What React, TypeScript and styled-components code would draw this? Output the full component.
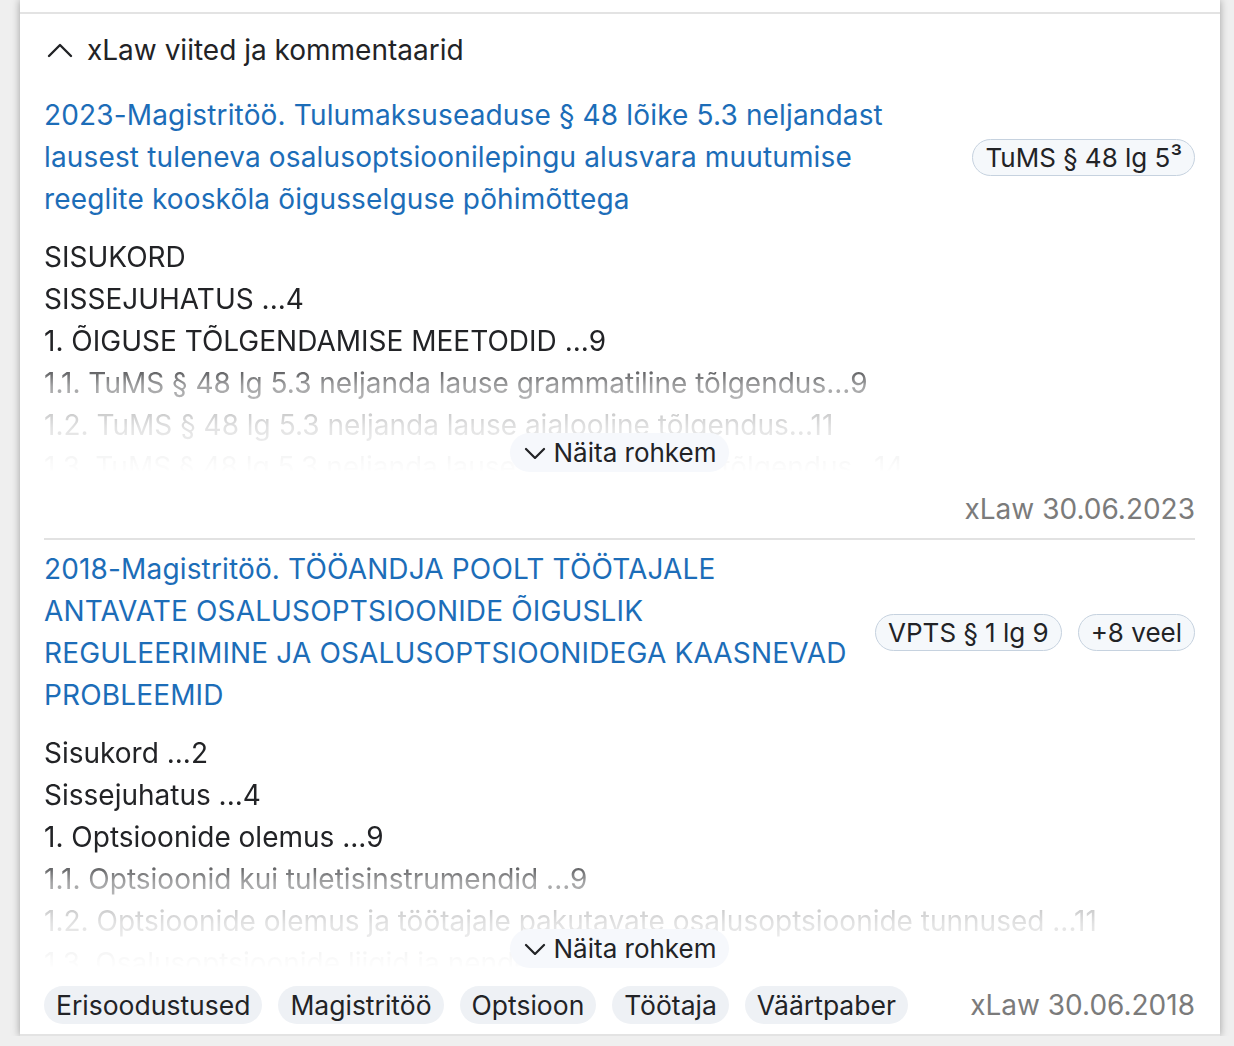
import React from 'react';
import styled, { createGlobalStyle } from 'styled-components';

const GlobalStyle = createGlobalStyle`
  html, body {
    margin: 0;
    padding: 0;
    background: #efefef;
    font-family: Inter, "Noto Sans", "Liberation Sans", sans-serif;
    color: #222326;
  }
`;

const Panel = styled.div`
  width: 1200px;
  margin-left: 20px;
  background: #ffffff;
  box-shadow: 0 0 8px rgba(0, 0, 0, 0.35);
`;

const TopRule = styled.div`
  height: 12px;
  border-bottom: 2px solid #e3e3e3;
`;

const Section = styled.section`
  padding: 0 25px 0 24px;
  border-bottom: 2px solid #e3e3e3;
`;

const SectionHeader = styled.button`
  display: flex;
  align-items: center;
  gap: 14px;
  height: 72px;
  padding: 0 0 0 3px;
  border: none;
  background: none;
  font: inherit;
  font-size: 28px;
  color: #222326;
  cursor: pointer;
`;

const Item = styled.article<{ $last?: boolean }>`
  padding: 8px 0 8px;
  border-bottom: ${(p) => (p.$last ? 'none' : '2px solid #e2e2e2')};
`;

const TitleRow = styled.div`
  display: flex;
  align-items: center;
  justify-content: space-between;
  gap: 24px;
`;

const Title = styled.a`
  flex: 1;
  font-size: 28px;
  line-height: 42px;
  letter-spacing: 0.15px;
  color: #1c6db8;
  text-decoration: none;
`;

const Pills = styled.div`
  display: flex;
  gap: 16px;
  flex-shrink: 0;
`;

const RefPill = styled.span`
  display: inline-flex;
  align-items: center;
  height: 35px;
  padding: 0 12px;
  border: 1px solid #c6d2df;
  border-radius: 20px;
  background: #f5f8fb;
  font-size: 26px;
  color: #222326;
  white-space: nowrap;
`;

const TocWrap = styled.div`
  position: relative;
  margin-top: 16px;
`;

const Toc = styled.div`
  height: 236px;
  overflow: hidden;
  font-size: 28px;
  line-height: 42px;
  color: #222326;
  -webkit-mask-image: linear-gradient(
    to bottom,
    #000 0,
    #000 122px,
    rgba(0, 0, 0, 0.42) 150px,
    rgba(0, 0, 0, 0.13) 192px,
    rgba(0, 0, 0, 0.04) 222px,
    transparent 236px
  );
  mask-image: linear-gradient(
    to bottom,
    #000 0,
    #000 122px,
    rgba(0, 0, 0, 0.42) 150px,
    rgba(0, 0, 0, 0.13) 192px,
    rgba(0, 0, 0, 0.04) 222px,
    transparent 236px
  );
`;

const TocLine = styled.div`
  white-space: nowrap;
`;

const MoreButton = styled.button`
  position: absolute;
  left: 50%;
  bottom: 0;
  transform: translateX(-50%);
  display: inline-flex;
  align-items: center;
  gap: 8px;
  height: 39px;
  padding: 0 13px 0 14px;
  border: none;
  border-radius: 20px;
  background: #f6f8fc;
  font: inherit;
  font-size: 26px;
  color: #222326;
  cursor: pointer;
`;

const Footer = styled.div`
  display: flex;
  align-items: center;
  justify-content: space-between;
  height: 42px;
  margin-top: 16px;
`;

const Tags = styled.div`
  display: flex;
  gap: 16px;
`;

const Tag = styled.span`
  display: inline-flex;
  align-items: center;
  height: 38px;
  padding: 0 12px;
  border-radius: 20px;
  background: #eef1f5;
  font-size: 26.5px;
  color: #222326;
`;

const Source = styled.span`
  margin-left: auto;
  font-size: 28px;
  color: #7b7b7b;
`;

const ChevronUp = () => (
  <svg width="26" height="15" viewBox="0 0 26 15" fill="none">
    <path d="M2 13 13 2l11 11" stroke="#222326" strokeWidth="2.4" strokeLinecap="round" strokeLinejoin="round" />
  </svg>
);

const ChevronDown = () => (
  <svg width="22" height="12" viewBox="0 0 22 12" fill="none">
    <path d="M2 2l9 9 9-9" stroke="#222326" strokeWidth="2.2" strokeLinecap="round" strokeLinejoin="round" />
  </svg>
);

interface Entry {
  title: string;
  refs: string[];
  toc: string[];
  tags: string[];
  source: string;
}

const entries: Entry[] = [
  {
    title:
      '2023-Magistritöö. Tulumaksuseaduse § 48 lõike 5.3 neljandast lausest tuleneva osalusoptsioonilepingu alusvara muutumise reeglite kooskõla õigusselguse põhimõttega',
    refs: ['TuMS § 48 lg 5³'],
    toc: [
      'SISUKORD',
      'SISSEJUHATUS ...4',
      '1. ÕIGUSE TÕLGENDAMISE MEETODID ...9',
      '1.1. TuMS § 48 lg 5.3 neljanda lause grammatiline tõlgendus...9',
      '1.2. TuMS § 48 lg 5.3 neljanda lause ajalooline tõlgendus...11',
      '1.3. TuMS § 48 lg 5.3 neljanda lause süstemaatiline tõlgendus...14',
    ],
    tags: [],
    source: 'xLaw 30.06.2023',
  },
  {
    title:
      '2018-Magistritöö. TÖÖANDJA POOLT TÖÖTAJALE ANTAVATE OSALUSOPTSIOONIDE ÕIGUSLIK REGULEERIMINE JA OSALUSOPTSIOONIDEGA KAASNEVAD PROBLEEMID',
    refs: ['VPTS § 1 lg 9', '+8 veel'],
    toc: [
      'Sisukord ...2',
      'Sissejuhatus ...4',
      '1. Optsioonide olemus ...9',
      '1.1. Optsioonid kui tuletisinstrumendid ...9',
      '1.2. Optsioonide olemus ja töötajale pakutavate osalusoptsioonide tunnused ...11',
      '1.3. Osalusoptsioonide liigid ja nende eripärad ...14',
    ],
    tags: ['Erisoodustused', 'Magistritöö', 'Optsioon', 'Töötaja', 'Väärtpaber'],
    source: 'xLaw 30.06.2018',
  },
];

const App: React.FC = () => {
  return (
    <>
      <GlobalStyle />
      <Panel>
        <TopRule />
        <Section>
          <SectionHeader>
            <ChevronUp />
            xLaw viited ja kommentaarid
          </SectionHeader>
          {entries.map((entry, index) => (
            <Item key={index} $last={index === entries.length - 1}>
              <TitleRow>
                <Title href="#">{entry.title}</Title>
                <Pills>
                  {entry.refs.map((ref) => (
                    <RefPill key={ref}>{ref}</RefPill>
                  ))}
                </Pills>
              </TitleRow>
              <TocWrap>
                <Toc>
                  {entry.toc.map((line) => (
                    <TocLine key={line}>{line}</TocLine>
                  ))}
                </Toc>
                <MoreButton>
                  <ChevronDown />
                  Näita rohkem
                </MoreButton>
              </TocWrap>
              <Footer>
                <Tags>
                  {entry.tags.map((tag) => (
                    <Tag key={tag}>{tag}</Tag>
                  ))}
                </Tags>
                <Source>{entry.source}</Source>
              </Footer>
            </Item>
          ))}
        </Section>
      </Panel>
    </>
  );
};

export default App;
